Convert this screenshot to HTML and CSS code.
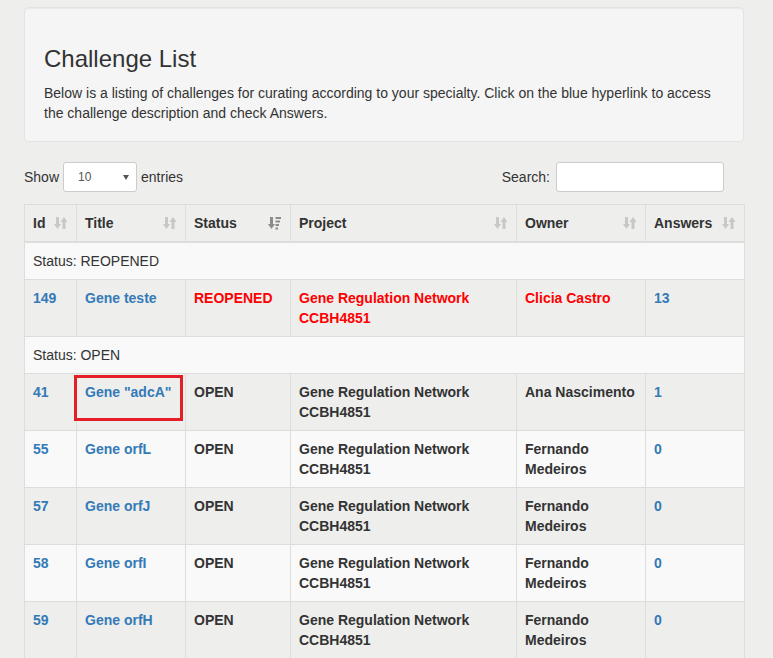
FILE: index.html
```html
<!DOCTYPE html>
<html lang="en">
<head>
<meta charset="utf-8">
<title>Challenge List</title>
<link rel="stylesheet" href="styles.css">
</head>
<body>
<div class="container">
  <div class="well">
    <h3 class="title">Challenge List</h3>
    <p class="lead-text">Below is a listing of challenges for curating according to your specialty. Click on the blue hyperlink to access the challenge description and check Answers.</p>
  </div>

  <div class="controls">
    <label class="length">Show
      <span class="select"><span class="select-value">10</span><span class="caret"></span></span>
      entries</label>
    <label class="search">Search: <input type="search" class="search-input"></label>
  </div>

  <div class="table-wrap">
    <table class="data">
      <colgroup>
        <col class="c-id"><col class="c-title"><col class="c-status"><col class="c-project"><col class="c-owner"><col class="c-answers">
      </colgroup>
      <thead>
        <tr>
          <th class="sorting">Id<svg class="sort-icon faint" viewBox="0 0 13 14" width="13" height="14"><rect x="2" y="1" width="3" height="8"/><polygon points="0,8 7,8 3.5,13"/><rect x="8.5" y="5" width="3" height="8"/><polygon points="6.5,6 13.5,6 10,1"/></svg></th>
          <th class="sorting">Title<svg class="sort-icon faint" viewBox="0 0 13 14" width="13" height="14"><rect x="2" y="1" width="3" height="8"/><polygon points="0,8 7,8 3.5,13"/><rect x="8.5" y="5" width="3" height="8"/><polygon points="6.5,6 13.5,6 10,1"/></svg></th>
          <th class="sorting">Status<svg class="sort-icon dark" viewBox="0 0 13 14" width="13" height="14"><rect x="2" y="1" width="3" height="8"/><polygon points="0,8 7,8 3.5,13"/><rect x="7.5" y="1" width="5.5" height="2"/><rect x="7.5" y="4.5" width="4.5" height="2"/><rect x="7.5" y="8" width="3.5" height="2"/><rect x="7.5" y="11.5" width="2.5" height="2"/></svg></th>
          <th class="sorting">Project<svg class="sort-icon faint" viewBox="0 0 13 14" width="13" height="14"><rect x="2" y="1" width="3" height="8"/><polygon points="0,8 7,8 3.5,13"/><rect x="8.5" y="5" width="3" height="8"/><polygon points="6.5,6 13.5,6 10,1"/></svg></th>
          <th class="sorting">Owner<svg class="sort-icon faint" viewBox="0 0 13 14" width="13" height="14"><rect x="2" y="1" width="3" height="8"/><polygon points="0,8 7,8 3.5,13"/><rect x="8.5" y="5" width="3" height="8"/><polygon points="6.5,6 13.5,6 10,1"/></svg></th>
          <th class="sorting">Answers<svg class="sort-icon faint" viewBox="0 0 13 14" width="13" height="14"><rect x="2" y="1" width="3" height="8"/><polygon points="0,8 7,8 3.5,13"/><rect x="8.5" y="5" width="3" height="8"/><polygon points="6.5,6 13.5,6 10,1"/></svg></th>
        </tr>
      </thead>
      <tbody>
        <tr class="group"><td colspan="6">Status: REOPENED</td></tr>
        <tr class="reopened">
          <td><a href="#">149</a></td>
          <td><a href="#">Gene teste</a></td>
          <td>REOPENED</td>
          <td>Gene Regulation Network CCBH4851</td>
          <td>Clicia Castro</td>
          <td><a href="#">13</a></td>
        </tr>
        <tr class="group"><td colspan="6">Status: OPEN</td></tr>
        <tr>
          <td><a href="#">41</a></td>
          <td><a href="#">Gene "adcA"</a></td>
          <td>OPEN</td>
          <td>Gene Regulation Network CCBH4851</td>
          <td>Ana Nascimento</td>
          <td><a href="#">1</a></td>
        </tr>
        <tr>
          <td><a href="#">55</a></td>
          <td><a href="#">Gene orfL</a></td>
          <td>OPEN</td>
          <td>Gene Regulation Network CCBH4851</td>
          <td>Fernando Medeiros</td>
          <td><a href="#">0</a></td>
        </tr>
        <tr>
          <td><a href="#">57</a></td>
          <td><a href="#">Gene orfJ</a></td>
          <td>OPEN</td>
          <td>Gene Regulation Network CCBH4851</td>
          <td>Fernando Medeiros</td>
          <td><a href="#">0</a></td>
        </tr>
        <tr>
          <td><a href="#">58</a></td>
          <td><a href="#">Gene orfI</a></td>
          <td>OPEN</td>
          <td>Gene Regulation Network CCBH4851</td>
          <td>Fernando Medeiros</td>
          <td><a href="#">0</a></td>
        </tr>
        <tr>
          <td><a href="#">59</a></td>
          <td><a href="#">Gene orfH</a></td>
          <td>OPEN</td>
          <td>Gene Regulation Network CCBH4851</td>
          <td>Fernando Medeiros</td>
          <td><a href="#">0</a></td>
        </tr>
      </tbody>
    </table>
    <div class="highlight"></div>
  </div>
</div>
</body>
</html>
```

FILE: styles.css
```css
* { box-sizing: border-box; }

html, body {
  margin: 0;
  background: #eeeeed;
}

body {
  font-family: "Liberation Sans", Arial, Helvetica, sans-serif;
  font-size: 14px;
  line-height: 20px;
  color: #333333;
  padding: 7px 0 0 24px;
  overflow: hidden;
}

.container {
  width: 720px;
}

.well {
  background: #f5f5f5;
  border: 1px solid #e3e3e3;
  border-radius: 4px;
  box-shadow: inset 0 1px 1px rgba(0, 0, 0, 0.05);
  padding: 19px 19px 18px 19px;
}

.title {
  font-size: 24px;
  font-weight: 400;
  line-height: 26px;
  margin: 19px 0 11px 0;
  color: #333333;
}

.lead-text {
  margin: 0;
}

.controls {
  display: flex;
  justify-content: space-between;
  align-items: center;
  margin-top: 20px;
  height: 30px;
}

.length, .search {
  display: flex;
  align-items: center;
  gap: 4px;
  font-weight: 400;
}

.select {
  display: flex;
  align-items: center;
  justify-content: space-between;
  width: 74px;
  height: 30px;
  background: #ffffff;
  border: 1px solid #cccccc;
  border-radius: 3px;
  padding: 0 7px 0 14px;
  font-size: 12px;
  color: #555555;
}

.caret {
  width: 0;
  height: 0;
  border-left: 3px solid transparent;
  border-right: 3px solid transparent;
  border-top: 5px solid #555555;
}

.search {
  margin-right: 20px;
  gap: 6px;
}

.search-input {
  width: 168px;
  height: 30px;
  border: 1px solid #cccccc;
  border-radius: 3px;
  background: #ffffff;
  font: inherit;
  padding: 0 8px;
  outline: none;
}

.table-wrap {
  position: relative;
  margin-top: 12px;
}

.data {
  width: 720px;
  table-layout: fixed;
  border-collapse: collapse;
  border-spacing: 0;
}

.c-id { width: 52px; }
.c-title { width: 109px; }
.c-status { width: 105px; }
.c-project { width: 226px; }
.c-owner { width: 129px; }
.c-answers { width: 99px; }

.data th,
.data td {
  border: 1px solid #dddddd;
  padding: 8px;
  line-height: 20px;
  text-align: left;
  vertical-align: top;
}

.data th {
  position: relative;
  font-weight: 700;
  border-bottom-width: 2px;
  vertical-align: bottom;
  padding-right: 26px;
}

.sort-icon {
  position: absolute;
  right: 9px;
  bottom: 11px;
}

.sort-icon.faint { fill: #c8c8c8; }
.sort-icon.dark { fill: #8c8c8c; }

.data td {
  font-weight: 700;
}

.data tbody tr:nth-child(odd) {
  background: #f9f9f9;
}

.data tr.group td {
  font-weight: 400;
}

.data a {
  color: #337ab7;
  text-decoration: none;
  font-weight: 700;
}

.data tr.reopened td {
  color: #ff0000;
}

.data tr.reopened td a {
  color: #337ab7;
}

.highlight {
  position: absolute;
  left: 50px;
  top: 171px;
  width: 109px;
  height: 46px;
  border: 3px solid #e31e26;
  pointer-events: none;
}
```
